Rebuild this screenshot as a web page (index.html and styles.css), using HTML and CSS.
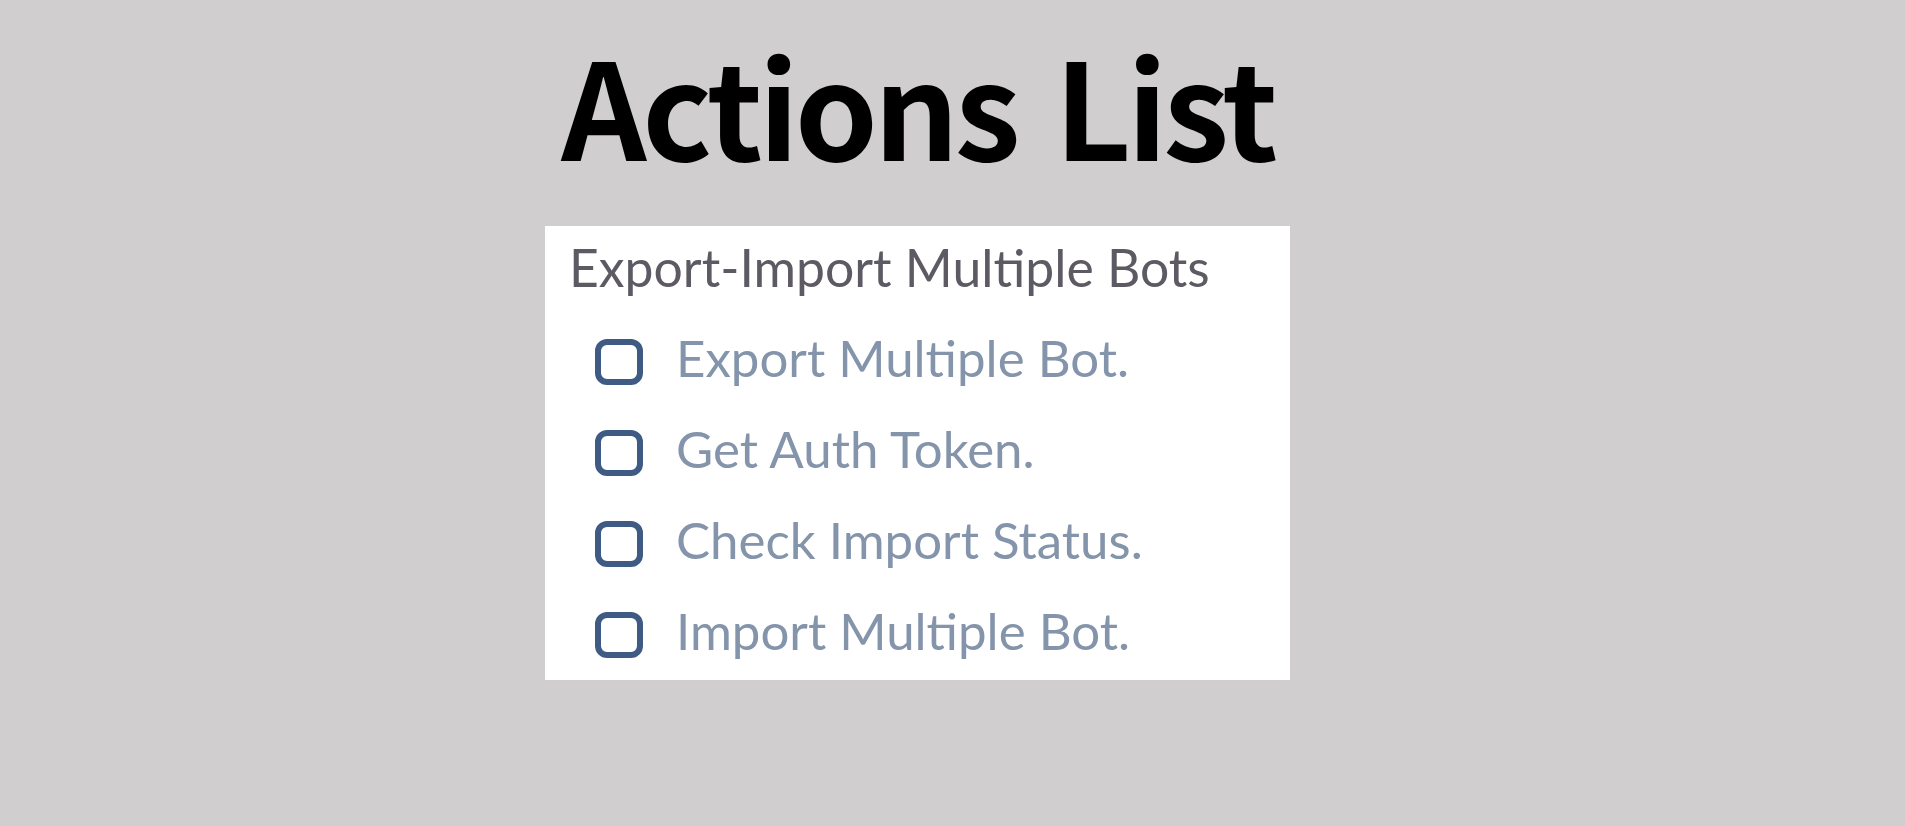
FILE: index.html
```html
<!DOCTYPE html>
<html lang="en">
<head>
<meta charset="utf-8">
<title>Actions List</title>
<link rel="stylesheet" href="styles.css">
</head>
<body>
<main class="page">
  <h1 class="title">Actions List</h1>
  <section class="card">
    <h2 class="group">Export-Import Multiple Bots</h2>
    <ul class="actions">
      <li class="action"><span class="box"></span><span class="label">Export Multiple Bot.</span></li>
      <li class="action"><span class="box"></span><span class="label">Get Auth Token.</span></li>
      <li class="action"><span class="box"></span><span class="label">Check Import Status.</span></li>
      <li class="action"><span class="box"></span><span class="label">Import Multiple Bot.</span></li>
    </ul>
  </section>
</main>
</body>
</html>
```
FILE: styles.css
```css
html, body {
  margin: 0;
  padding: 0;
  background: #d0cecf;
}
body {
  height: 826px;
  overflow: hidden;
}
.page {
  width: 745px;
  margin-left: 545px;
  display: flex;
  flex-direction: column;
}
.title {
  margin: 0;
  height: 226px;
  box-sizing: border-box;
  padding-top: 28px;
  font-family: "Noto Sans CJK JP", "Noto Sans", sans-serif;
  font-weight: 700;
  font-size: 133px;
  line-height: 150px;
  color: #000;
  text-align: center;
  white-space: nowrap;
  letter-spacing: -4.2px;
  word-spacing: 12px;
}
.card {
  background: #fff;
  height: 454px;
  box-sizing: border-box;
  padding: 6px 0 0 24px;
  font-family: Lato, "Open Sans", sans-serif;
}
.group {
  margin: 0;
  font-weight: 400;
  font-size: 51.7px;
  line-height: 70px;
  color: #5d5a63;
  white-space: nowrap;
}
.actions {
  list-style: none;
  margin: 10px 0 0;
  padding: 0 0 0 26px;
  display: flex;
  flex-direction: column;
}
.action {
  display: flex;
  align-items: center;
  gap: 33px;
  height: 91px;
}
.box {
  flex: none;
  align-self: flex-start;
  width: 36px;
  height: 34px;
  border: 6px solid #3f5b83;
  border-radius: 12px;
  margin-top: 27px;
}
.label {
  font-size: 51px;
  line-height: 60px;
  color: #8494aa;
  white-space: nowrap;
}
```
